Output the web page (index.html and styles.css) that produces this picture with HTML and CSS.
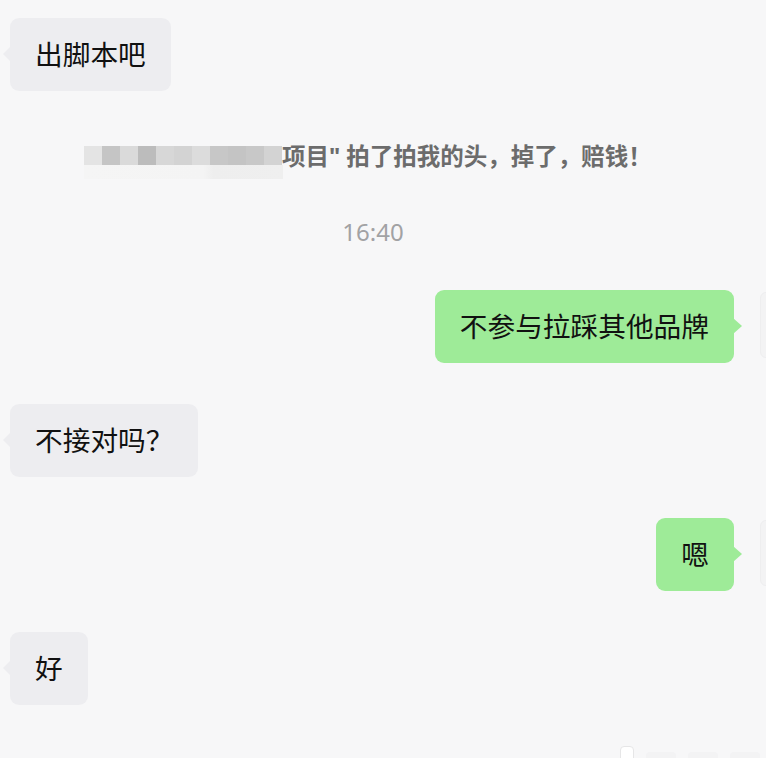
FILE: index.html
```html
<!DOCTYPE html>
<html lang="zh-CN">
<head>
  <meta charset="UTF-8">
  <meta name="viewport" content="width=device-width, initial-scale=1.0">
  <title>聊天记录</title>
  <link rel="stylesheet" href="styles.css">
</head>
<body>

  <div class="chat">
    <div class="row left">
      <div class="bubble">出脚本吧</div>
    </div>

    <div class="system">
      <div class="mosaic">
        <span class="m1"></span><span class="m2"></span><span class="m3"></span><span class="m4"></span>
        <span class="m5"></span><span class="m6"></span><span class="m7"></span><span class="m8"></span>
        <span class="m9"></span><span class="m10"></span><span class="m11"></span>
      </div>
      <span class="system-text">项目" 拍了拍我的头，掉了，赔钱！</span>
    </div>

    <div class="time">16:40</div>

    <div class="row right">
      <div class="bubble">不参与拉踩其他品牌</div>
      <div class="edge"></div>
    </div>

    <div class="row left">
      <div class="bubble">不接对吗？</div>
    </div>

    <div class="row right">
      <div class="bubble">嗯</div>
      <div class="edge"></div>
    </div>

    <div class="row left">
      <div class="bubble">好</div>
    </div>
  </div>

  <div class="footer">
    <div class="blur">
      <span class="b1"></span><span class="b2"></span><span class="b3"></span><span class="b4"></span>
    </div>
  </div>

</body>
</html>
```

FILE: styles.css
```css
body {
  margin: 0;
  background-color: #f7f7f8;
  font-family: "Noto Sans", "Noto Sans CJK SC", sans-serif;
  width: 766px;
  height: 758px;
  overflow: hidden;
  display: flex;
  flex-direction: column;
}

.chat {
  display: flex;
  flex-direction: column;
  padding-top: 18px;
  flex: 1;
}

.row {
  display: flex;
  margin-bottom: 41px;
}

.row.left {
  padding-left: 10px;
}

.row.right {
  justify-content: flex-end;
  padding-right: 32px;
  position: relative;
}

.bubble {
  position: relative;
  font-size: 27.7px;
  line-height: 37px;
  padding: 18px 25px;
  border-radius: 9px;
  color: #111111;
  background-color: #ededf0;
}

.left .bubble::before {
  content: "";
  position: absolute;
  left: -7px;
  top: 28px;
  border-top: 8px solid transparent;
  border-bottom: 8px solid transparent;
  border-right: 8px solid #ededf0;
}

.right .bubble {
  background-color: #9eeb98;
}

.right .bubble::after {
  content: "";
  position: absolute;
  right: -8px;
  top: 28px;
  border-top: 8px solid transparent;
  border-bottom: 8px solid transparent;
  border-left: 9px solid #9eeb98;
}

.edge {
  position: absolute;
  right: -10px;
  top: 2px;
  width: 14px;
  height: 64px;
  border-radius: 6px;
  background-color: #f3f3f4;
  border: 1px solid #eeeeef;
}

.system {
  display: flex;
  align-items: center;
  padding-left: 84px;
  margin-top: 8px;
  height: 30px;
}

.mosaic {
  display: flex;
  position: relative;
}

.mosaic span {
  width: 18px;
  height: 19px;
}

.m1 { background-color: #e4e4e4; }
.m2 { background-color: #c5c5c5; }
.m3 { background-color: #dadada; }
.m4 { background-color: #bcbcbc; }
.m5 { background-color: #d7d7d7; }
.m6 { background-color: #d3d3d3; }
.m7 { background-color: #dcdcdc; }
.m8 { background-color: #c7c7c7; }
.m9 { background-color: #c4c4c4; }
.m10 { background-color: #c8c8c8; }
.m11 { background-color: #d3d3d3; }

.mosaic::after {
  content: "";
  position: absolute;
  left: 0;
  top: 19px;
  width: 199px;
  height: 14px;
  background: linear-gradient(to right, #f5f5f5 0, #f4f4f4 60%, #eeeeee 65%, #efefef 100%);
}

.system-text {
  font-size: 23.5px;
  font-weight: 700;
  color: #6c6c6c;
}

.time {
  text-align: center;
  font-size: 24px;
  line-height: 30px;
  color: #a2a2a4;
  margin-top: 47px;
  margin-bottom: 43px;
  padding-right: 20px;
}

.footer {
  height: 40px;
  border-bottom: 2px solid #ebebec;
  display: flex;
  justify-content: flex-end;
  align-items: flex-end;
  padding-right: 6px;
  padding-bottom: 8px;
  box-sizing: border-box;
}

.blur {
  display: flex;
  gap: 12px;
  align-items: flex-end;
}

.blur span {
  height: 20px;
  border-radius: 4px;
  background-color: #f3f3f4;
}

.b1 { width: 12px; height: 24px !important; background-color: #ffffff !important; border: 1px solid #e6e6e7; }
.b2 { width: 30px; }
.b3 { width: 30px; }
.b4 { width: 30px; }
```
